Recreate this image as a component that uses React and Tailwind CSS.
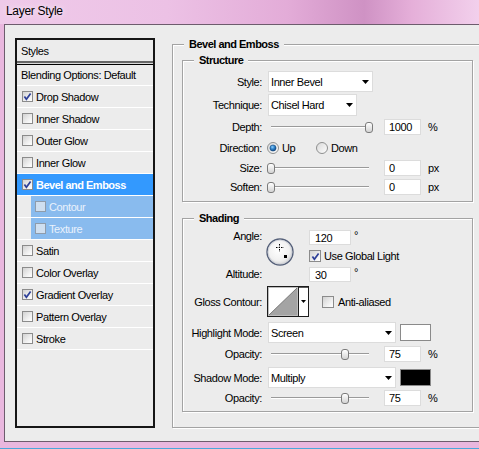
import React from 'react';

const etched = "border border-[#a3a3a3] shadow-[inset_1px_1px_0_#ffffff,1px_1px_0_#ffffff]";

function Check({ checked = false, dim = false, big = false }) {
  const size = big ? 'w-[12px] h-[12px]' : 'w-[11px] h-[11px]';
  const look = dim
    ? 'border-[#8f9cab] bg-[#cfdff0]'
    : 'border-[#8b8b8b] bg-[linear-gradient(135deg,#d2d2d2,#f4f4f4_70%,#ffffff)]';
  return (
    <span className={`${size} ${look} border shrink-0 flex items-center justify-center`}>
      {checked && (
        <svg width="9" height="9" viewBox="0 0 9 9">
          <path d="M1.4 4.4 L3.4 7.2 L7.6 1.4" stroke="#2d3f98" strokeWidth="1.7" fill="none" />
        </svg>
      )}
    </span>
  );
}

function Radio({ on = false }) {
  return (
    <svg width="12" height="12" viewBox="0 0 12 12" className="shrink-0">
      <defs>
        <linearGradient id={on ? 'rgOn' : 'rgOff'} x1="0" y1="0" x2="1" y2="1">
          <stop offset="0" stopColor="#d8d8d8" />
          <stop offset="1" stopColor="#ffffff" />
        </linearGradient>
        <radialGradient id="rdot" cx="40%" cy="35%" r="70%">
          <stop offset="0" stopColor="#8fd0ff" />
          <stop offset="0.5" stopColor="#2a7ec6" />
          <stop offset="1" stopColor="#0d3f78" />
        </radialGradient>
      </defs>
      <circle cx="6" cy="6" r="5.5" fill={`url(#${on ? 'rgOn' : 'rgOff'})`} stroke="#8e8f8f" strokeWidth="1" />
      {on && <circle cx="6" cy="6" r="3.1" fill="url(#rdot)" stroke="#1b4c80" strokeWidth="0.6" />}
    </svg>
  );
}

function Label({ children }) {
  return <div className="w-[70px] shrink-0 flex justify-end whitespace-nowrap">{children}</div>;
}

function Select({ w, value }) {
  return (
    <div className={`${w} ml-[1px] h-full shrink-0 bg-white border border-[#dcdcdc] flex items-center justify-between pl-[2px] pr-[3px]`}>
      <span className="whitespace-nowrap">{value}</span>
      <svg width="7" height="4" viewBox="0 0 7 4">
        <path d="M0 0H7L3.5 4Z" fill="#000" />
      </svg>
    </div>
  );
}

function Num({ v, wide = false }) {
  const cls = wide ? 'w-[42px] h-[15px] pl-[5px]' : 'w-[37px] h-[16px] pl-[4px]';
  return (
    <div className={`${cls} shrink-0 bg-white border border-[#dcdcdc] flex items-center`}>{v}</div>
  );
}

function Slider({ pct }) {
  return (
    <div className="relative w-[112px] h-[16px] shrink-0 flex items-center">
      <div className="ml-[4px] w-[98px] h-[2px] border-t border-[#9a9a9a] bg-white" />
      <div
        className="absolute top-[3px] w-[8px] h-[11px] rounded-[3px] border border-[#7b7b7b] bg-[linear-gradient(#ffffff,#d3d3d3)]"
        style={{ left: Math.round(4 + pct * 0.98 - 4) }}
      />
    </div>
  );
}

function SliderRow({ label, pct, v, unit, h }) {
  return (
    <div className={`${h} flex items-center gap-[5px]`}>
      <Label>{label}</Label>
      <Slider pct={pct} />
      <Num v={v} />
      <span className="ml-[2px]">{unit}</span>
    </div>
  );
}

function AngleDial() {
  return (
    <svg width="28" height="28" viewBox="0 0 28 28">
      <defs>
        <radialGradient id="dial" cx="45%" cy="42%" r="62%">
          <stop offset="0" stopColor="#ffffff" />
          <stop offset="0.65" stopColor="#f1f1f1" />
          <stop offset="1" stopColor="#cfcfcf" />
        </radialGradient>
      </defs>
      <circle cx="14" cy="14" r="13" fill="url(#dial)" stroke="#56617a" strokeWidth="1.4" />
      <circle cx="14" cy="14" r="11.9" fill="none" stroke="#c9cdd6" strokeWidth="0.8" />
      <g fill="#000">
        <rect x="13" y="9" width="1" height="1" />
        <rect x="13" y="6" width="1" height="1" />
        <rect x="13" y="7.5" width="1" height="0.8" />
        <rect x="13" y="11" width="1" height="1" />
        <rect x="13" y="12.5" width="1" height="0.8" />
        <rect x="10" y="9" width="1" height="1" />
        <rect x="11.5" y="9" width="0.8" height="1" />
        <rect x="15" y="9" width="1" height="1" />
        <rect x="16.5" y="9" width="0.8" height="1" />
        <rect x="18" y="17" width="3" height="3" />
      </g>
    </svg>
  );
}

function ContourBox() {
  return (
    <div className="w-[42px] h-[31px] shrink-0 border border-[#1c1c1c] bg-white flex shadow-[inset_1px_1px_0_#5a5a5a]">
      <svg width="30" height="29" viewBox="0 0 30 29" className="shrink-0">
        <rect x="0.5" y="0.5" width="29" height="28" fill="#fff" stroke="#bdbdbd" />
        <polygon points="1,28 29,1 29,28" fill="#a4a4a4" />
        <line x1="1" y1="28" x2="29" y2="1" stroke="#7a7a7a" strokeWidth="1" />
      </svg>
      <div className="w-[1px] bg-[#1c1c1c]" />
      <div className="flex-1 flex items-center justify-center">
        <svg width="5" height="3" viewBox="0 0 5 3">
          <path d="M0 0H5L2.5 3Z" fill="#000" />
        </svg>
      </div>
    </div>
  );
}

const items = [
  { label: 'Drop Shadow', checked: true },
  { label: 'Inner Shadow' },
  { label: 'Outer Glow' },
  { label: 'Inner Glow' },
  { label: 'Bevel and Emboss', checked: true, active: true },
  { label: 'Contour', sub: true },
  { label: 'Texture', sub: true },
  { label: 'Satin' },
  { label: 'Color Overlay' },
  { label: 'Gradient Overlay', checked: true },
  { label: 'Pattern Overlay' },
  { label: 'Stroke' },
];

function StyleRow({ it }) {
  if (it.sub) {
    return (
      <div className="h-[22px] shrink-0 border-b border-white flex">
        <div className="w-[14px] shrink-0" />
        <div className="flex-1 bg-[#89bbee] flex items-center pl-[4px] gap-[3px] text-[#eaf2fc]">
          <Check dim />
          <span>{it.label}</span>
        </div>
      </div>
    );
  }
  if (it.active) {
    return (
      <div className="h-[22px] shrink-0 border-b border-white bg-[#3399fe] flex items-center pl-[5px] gap-[3px] text-white font-bold tracking-[-0.5px]">
        <Check checked />
        <span>{it.label}</span>
      </div>
    );
  }
  return (
    <div className="h-[22px] shrink-0 border-b border-white flex items-center pl-[5px] gap-[3px]">
      <Check checked={it.checked} />
      <span>{it.label}</span>
    </div>
  );
}

export default function App() {
  return (
    <div className="w-[479px] h-[449px] overflow-hidden bg-[#e9b7de] flex flex-col font-['Liberation_Sans',Arial,sans-serif] text-[11px] leading-[14px] tracking-[-0.4px] text-black">
      <div className="h-[24px] shrink-0 pl-[6px] pt-[4px] bg-[linear-gradient(90deg,#efcae9_0%,#ecc1e5_35%,#e3acd8_60%,#cf92c4_76%,#e5afd9_86%,#f2d0ec_100%)]">
        <span className="text-[12px] tracking-[-0.3px] [text-shadow:0_0_6px_#ffffff]">Layer Style</span>
      </div>
      <div className="h-[418px] shrink-0 flex">
        <div className="w-[4px] shrink-0" />
        <div className="flex-1 border-t border-l border-b border-[#6d5c6d] bg-[#ececec] flex items-start overflow-hidden">
          {/* left list */}
          <div className="ml-[10px] mt-[13px] w-[140px] h-[390px] shrink-0 border-2 border-[#161616] flex flex-col">
            <div className="h-[21px] shrink-0 flex items-center pl-[4px]">Styles</div>
            <div className="h-[2px] shrink-0 bg-[#666666]" />
            <div className="h-[1px] shrink-0 bg-[#d9d9d9]" />
            <div className="h-[1px] shrink-0 bg-black" />
            <div className="h-[21px] shrink-0 border-b border-white flex items-center pl-[4px]">Blending Options: Default</div>
            {items.map((it) => (
              <StyleRow key={it.label} it={it} />
            ))}
          </div>

          {/* right */}
          <fieldset className={`ml-[17px] mt-[12px] w-[311px] h-[391px] shrink-0 pl-[9px] ${etched}`}>
            <legend className="ml-[2px] px-[5px] font-bold tracking-[-0.5px] bg-[#ececec] leading-[14px]">Bevel and Emboss</legend>

            <fieldset className={`mt-[2px] w-[291px] pl-[9px] pb-[5px] ${etched}`}>
              <legend className="ml-[2px] px-[5px] font-bold tracking-[-0.5px] bg-[#ececec] leading-[14px]">Structure</legend>
              <div className="mt-[4px] h-[21px] flex items-center gap-[5px]">
                <Label>Style:</Label>
                <Select w="w-[105px]" value="Inner Bevel" />
              </div>
              <div className="mt-[2px] h-[22px] flex items-center gap-[5px]">
                <Label>Technique:</Label>
                <Select w="w-[89px]" value="Chisel Hard" />
              </div>
              <div className="mt-[1px]">
                <SliderRow h="h-[20px]" label="Depth:" pct={100} v="1000" unit="%" />
              </div>
              <div className="mt-[1px] h-[20px] flex items-center gap-[5px]">
                <Label>Direction:</Label>
                <div className="w-[44px] shrink-0 flex items-center gap-[3px]">
                  <Radio on />
                  <span>Up</span>
                </div>
                <div className="flex items-center gap-[3px]">
                  <Radio />
                  <span>Down</span>
                </div>
              </div>
              <SliderRow h="h-[19px]" label="Size:" pct={0} v="0" unit="px" />
              <SliderRow h="h-[19px]" label="Soften:" pct={0} v="0" unit="px" />
            </fieldset>

            <fieldset className={`mt-[9px] w-[291px] pl-[9px] pb-[4px] ${etched}`}>
              <legend className="ml-[2px] px-[5px] font-bold tracking-[-0.5px] bg-[#ececec] leading-[14px]">Shading</legend>
              <div className="mt-[4px] h-[52px] flex">
                <div className="w-[70px] shrink-0 flex flex-col justify-between items-end">
                  <span>Angle:</span>
                  <span>Altitude:</span>
                </div>
                <div className="ml-[4px] mt-[9px] shrink-0">
                  <AngleDial />
                </div>
                <div className="ml-[15px] pt-[1px] flex flex-col">
                  <div className="h-[15px] flex items-start">
                    <Num v="120" wide />
                    <span className="ml-[3px] leading-[10px]">°</span>
                  </div>
                  <div className="mt-[5px] h-[12px] flex items-center gap-[3px]">
                    <Check checked big />
                    <span className="whitespace-nowrap">Use Global Light</span>
                  </div>
                  <div className="mt-[5px] h-[15px] flex items-start">
                    <Num v="30" wide />
                    <span className="ml-[3px] leading-[10px]">°</span>
                  </div>
                </div>
              </div>
              <div className="mt-[5px] h-[31px] flex items-center gap-[5px]">
                <Label>Gloss Contour:</Label>
                <ContourBox />
                <div className="ml-[8px] flex items-center gap-[4px]">
                  <Check big />
                  <span>Anti-aliased</span>
                </div>
              </div>
              <div className="mt-[5px] h-[21px] flex items-center gap-[5px]">
                <Label>Highlight Mode:</Label>
                <Select w="w-[128px]" value="Screen" />
                <div className="ml-[-1px] w-[31px] h-[17px] shrink-0 border border-[#8a8a8a] bg-white" />
              </div>
              <div className="mt-[1px]">
                <SliderRow h="h-[19px]" label="Opacity:" pct={75} v="75" unit="%" />
              </div>
              <div className="mt-[4px] h-[21px] flex items-center gap-[5px]">
                <Label>Shadow Mode:</Label>
                <Select w="w-[128px]" value="Multiply" />
                <div className="ml-[-1px] w-[31px] h-[17px] shrink-0 border border-[#8a8a8a] bg-black" />
              </div>
              <SliderRow h="h-[19px]" label="Opacity:" pct={75} v="75" unit="%" />
            </fieldset>
          </fieldset>
        </div>
      </div>
      <div className="h-[6px] shrink-0" />
      <div className="h-[1px] shrink-0 bg-[#4aa7dc]" />
    </div>
  );
}
